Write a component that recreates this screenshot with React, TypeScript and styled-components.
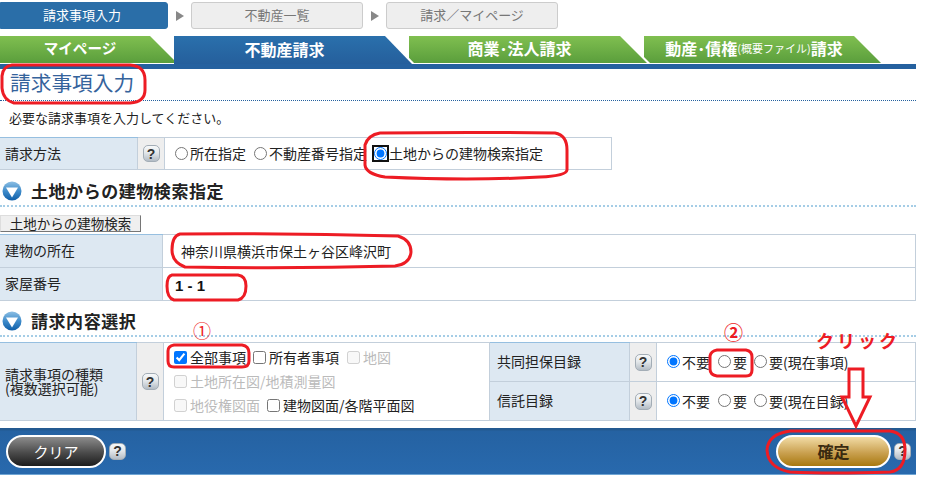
import React, { ReactElement } from "react";
import styled, { createGlobalStyle } from "styled-components";

const GlobalStyle = createGlobalStyle`
	html, body {
		margin: 0;
		padding: 0;
		background: #fff;
		overflow: hidden;
	}
	body {
		font-family: "Noto Sans CJK JP", "Liberation Sans", sans-serif;
		font-size: 14px;
		line-height: 16px;
		color: #222;
	}
	input {
		margin: 0;
	}
`;

const Page = styled.div`
	position: relative;
	width: 952px;
	height: 484px;
	overflow: hidden;
`;
const Content = styled.div`
	width: 916px;
	display: flex;
	flex-direction: column;
`;

const Steps = styled.div`
	display: flex;
	align-items: center;
	height: 27px;
	margin-top: 2px;
`;
const Step = styled.div<{ $active?: boolean }>`
	width: ${(p) => (p.$active ? "168px" : "172px")};
	height: 27px;
	box-sizing: border-box;
	display: flex;
	align-items: center;
	justify-content: center;
	padding: 0 ${(p) => (p.$active ? "4px" : "0")} 2px 0;
	font-size: 13px;
	border-radius: ${(p) => (p.$active ? "0 3px 3px 0" : "3px")};
	color: ${(p) => (p.$active ? "#fff" : "#777")};
	background: ${(p) => (p.$active ? "#2a6ea8" : "#eee")};
	border: 1px solid ${(p) => (p.$active ? "#2a6ea8" : "#ccc")};
`;
const StepArrow = styled.div`
	width: 0;
	height: 0;
	margin: 0 7px 0 8px;
	border-left: 8px solid #888;
	border-top: 5px solid transparent;
	border-bottom: 5px solid transparent;
`;

const Tabs = styled.div`
	display: flex;
	height: 27px;
	margin: 7px 0 1px;
`;
const Tab = styled.div<{ $active?: boolean; $w: number; $z: number }>`
	position: relative;
	z-index: ${(p) => p.$z};
	width: ${(p) => p.$w}px;
	height: ${(p) => (p.$active ? "28px" : "27px")};
	margin-right: -6px;
	display: flex;
	background: #fff;
	clip-path: polygon(0 0, calc(100% - 27px) 0, 100% 100%, 0 100%);
`;
const TabFace = styled.div<{ $active?: boolean; $size?: number }>`
	flex: 1;
	padding: 0 20px 3px 0;
	display: flex;
	align-items: center;
	justify-content: center;
	font-size: ${(p) => p.$size ?? 16}px;
	font-weight: 700;
	color: #fff;
	white-space: nowrap;
	background: ${(p) =>
		p.$active
			? "linear-gradient(#2a70ac, #255f9c)"
			: "linear-gradient(#80bf50, #5a9e3c)"};
	clip-path: polygon(0 0, calc(100% - 30px) 0, calc(100% - 3px) 100%, 0 100%);
`;
const TabSmall = styled.span`
	font-size: 11px;
	font-weight: 400;
`;
const TabLine = styled.div`
	height: 5px;
	background: #25619f;
`;

const PageTitle = styled.h1`
	margin: 0;
	height: 32px;
	box-sizing: border-box;
	padding-left: 10px;
	font-size: 20.7px;
	line-height: 27px;
	font-weight: 400;
	color: #35639c;
	border-bottom: 1px dotted #25619f;
`;
const Lead = styled.p`
	margin: 0;
	height: 36px;
	padding: 9px 0 0 9px;
	box-sizing: border-box;
	font-size: 13px;
`;

const Sheet = styled.div<{ $w?: number; $top?: number }>`
	display: flex;
	flex-direction: column;
	width: ${(p) => (p.$w ? `${p.$w}px` : "auto")};
	margin-top: ${(p) => p.$top ?? 0}px;
	border-top: 1px solid #c3cfdb;
`;
const Row = styled.div<{ $h: number }>`
	display: flex;
	height: ${(p) => p.$h}px;
	box-sizing: border-box;
	border-bottom: 1px solid #c3cfdb;
`;
const Label = styled.div<{ $w: number; $pad?: number; $first?: boolean }>`
	width: ${(p) => p.$w}px;
	flex: none;
	box-sizing: border-box;
	display: flex;
	align-items: center;
	padding: 0 0 2px ${(p) => p.$pad ?? 5}px;
	font-size: 14px;
	line-height: 14px;
	background: #dde8f2;
	border-right: 1px solid #c3cfdb;
	box-shadow: ${(p) => (p.$first ? "0 -1px 0 #96bfe0" : "none")};
`;
const HelpCell = styled.div<{ $w: number }>`
	width: ${(p) => p.$w}px;
	flex: none;
	display: flex;
	align-items: center;
	justify-content: center;
	background: #eee;
	border-right: 1px solid #c3cfdb;
`;
const Value = styled.div<{ $pad?: number }>`
	flex: 1;
	display: flex;
	align-items: center;
	padding: 0 0 1px ${(p) => p.$pad ?? 10}px;
	border-right: 1px solid #c3cfdb;
	font-size: 14px;
`;
const HouseNumber = styled.strong`
	font-family: "Liberation Sans", sans-serif;
	font-size: 15px;
	color: #111;
	white-space: pre;
	padding-top: 5px;
`;
const HelpIcon = styled.span`
	width: 17px;
	height: 17px;
	box-sizing: border-box;
	flex: none;
	display: flex;
	align-items: center;
	justify-content: center;
	font-family: "Liberation Sans", sans-serif;
	font-size: 14px;
	font-weight: 700;
	color: #333;
	border: 1px solid #a3adb6;
	border-radius: 5px;
	background: linear-gradient(#f7f9fa, #e3e7ea 45%, #b3bcc5);
`;

const SectionHead = styled.h2<{ $top: number }>`
	margin: ${(p) => p.$top}px 0 0;
	height: 26px;
	box-sizing: border-box;
	display: flex;
	align-items: center;
	gap: 9px;
	padding: 0 0 5px 2px;
	font-size: 17px;
	letter-spacing: 0.55px;
	font-weight: 700;
	color: #222;
	border-bottom: 2px dotted #a5cde6;
`;
const Ball = styled.svg`
	width: 20px;
	height: 20px;
	flex: none;
`;

const SearchButton = styled.button`
	width: 141px;
	height: 17px;
	margin-top: 8px;
	padding: 0;
	font-family: inherit;
	font-size: 13.5px;
	line-height: 15px;
	color: #222;
	background: #efefef;
	border: 1px solid #767676;
	border-left-color: #ddd;
	border-top-color: #ddd;
	display: block;
`;

const Choice = styled.label<{ $off?: boolean; $gap?: number; $inner?: number }>`
	display: inline-flex;
	align-items: center;
	gap: ${(p) => p.$inner ?? 2}px;
	margin-right: ${(p) => p.$gap ?? 0}px;
	white-space: nowrap;
	font-size: 14px;
	color: ${(p) => (p.$off ? "#bbb" : "#222")};
`;
const Radio = styled.input.attrs({ type: "radio" })<{ $focus?: boolean }>`
	width: 13px;
	height: 13px;
	${(p) => p.$focus && "outline: 2px solid #111; outline-offset: 0; border-radius: 5px;"}
`;
const Check = styled.input.attrs({ type: "checkbox" })`
	width: 13px;
	height: 13px;
`;

const Columns = styled.div`
	display: flex;
	margin-top: 5px;
`;
const Tall = styled.div`
	display: flex;
	width: 490px;
	height: 79px;
	box-sizing: border-box;
	border-top: 1px solid #c3cfdb;
	border-bottom: 1px solid #c3cfdb;
`;
const KindCell = styled.div`
	flex: 1;
	display: flex;
	flex-direction: column;
	justify-content: center;
	gap: 7px;
	padding: 0 0 1px 10px;
	border-right: 1px solid #c3cfdb;
`;
const KindLine = styled.div`
	display: flex;
	height: 17px;
`;

const Footer = styled.div`
	margin-top: 7px;
	height: 47px;
	box-sizing: border-box;
	display: flex;
	align-items: center;
	justify-content: space-between;
	padding: 0 5px 0 6px;
	background: linear-gradient(#235a91 0, #235a91 2px, #2562a2 3px, #2869ad 45px);
	border-bottom: 1px solid #6fa5d4;
`;
const FooterGroup = styled.div`
	display: flex;
	align-items: center;
	gap: 3px;
`;
const PillButton = styled.button<{ $gold?: boolean }>`
	width: ${(p) => (p.$gold ? "115px" : "100px")};
	height: 33px;
	border-radius: 17px;
	border: 2px solid #fff;
	padding: 0;
	font-family: inherit;
	font-size: ${(p) => (p.$gold ? "16px" : "15px")};
	font-weight: ${(p) => (p.$gold ? 700 : 400)};
	color: ${(p) => (p.$gold ? "#3a2a10" : "#fff")};
	background: ${(p) =>
		p.$gold
			? "linear-gradient(#f2dca6, #c9a04f 55%, #a8780f)"
			: "linear-gradient(#8c8c8c, #4a4a4a 55%, #1c1c1c)"};
`;

const Marks = styled.svg`
	position: absolute;
	left: 0;
	top: 0;
	width: 952px;
	height: 484px;
	pointer-events: none;
	fill: none;
	stroke: #ed1c24;
	stroke-width: 3;
`;
const Note = styled.span<{ $x: number; $y: number; $size: number; $bold?: boolean; $track?: number }>`
	position: absolute;
	left: ${(p) => p.$x}px;
	top: ${(p) => p.$y}px;
	font-size: ${(p) => p.$size}px;
	line-height: 20px;
	letter-spacing: ${(p) => p.$track ?? 0}px;
	font-weight: ${(p) => (p.$bold ? 700 : 400)};
	color: #ed1c24;
`;

function BallIcon(): ReactElement {
	return (
		<Ball viewBox="0 0 20 20">
			<defs>
				<linearGradient id="ball" x1="0" y1="0" x2="0" y2="1">
					<stop offset="0" stopColor="#8dbfe3" />
					<stop offset="0.5" stopColor="#3f8ccb" />
					<stop offset="1" stopColor="#0f5ea8" />
				</linearGradient>
			</defs>
			<circle cx="10" cy="10" r="9.5" fill="url(#ball)" />
			<path d="M4 6.5 H16 L10 16.5 Z" fill="#fff" />
		</Ball>
	);
}

function Ring({ d }: { d: string }): ReactElement {
	return <path d={d} />;
}

function HelpBox({ w }: { w: number }): ReactElement {
	return (
		<HelpCell $w={w}>
			<HelpIcon>?</HelpIcon>
		</HelpCell>
	);
}

export default function App(): ReactElement {
	return (
		<Page>
			<GlobalStyle />
			<Content>
				<Steps>
					<Step $active>請求事項入力</Step>
					<StepArrow />
					<Step>不動産一覧</Step>
					<StepArrow />
					<Step>請求／マイページ</Step>
				</Steps>
				<Tabs>
					<Tab $w={180} $z={1}>
						<TabFace $size={14.6}>マイページ</TabFace>
					</Tab>
					<Tab $active $w={241} $z={3}>
						<TabFace $active>不動産請求</TabFace>
					</Tab>
					<Tab $w={241} $z={2}>
						<TabFace>商業･法人請求</TabFace>
					</Tab>
					<Tab $w={240} $z={1}>
						<TabFace>
							動産･債権<TabSmall>(概要ファイル)</TabSmall>請求
						</TabFace>
					</Tab>
				</Tabs>
				<TabLine />
				<PageTitle>請求事項入力</PageTitle>
				<Lead>必要な請求事項を入力してください。</Lead>
				<Sheet $w={612}>
					<Row $h={32}>
						<Label $w={138} $first>請求方法</Label>
						<HelpBox w={26} />
						<Value>
							<Choice $gap={8}>
								<Radio name="method" />
								所在指定
							</Choice>
							<Choice $gap={7}>
								<Radio name="method" />
								不動産番号指定
							</Choice>
							<Choice>
								<Radio name="method" defaultChecked $focus />
								土地からの建物検索指定
							</Choice>
						</Value>
					</Row>
				</Sheet>
				<SectionHead $top={11}>
					<BallIcon />
					土地からの建物検索指定
				</SectionHead>
				<SearchButton>土地からの建物検索</SearchButton>
				<Sheet $top={2}>
					<Row $h={33}>
						<Label $w={163} $first>建物の所在</Label>
						<Value $pad={18}>神奈川県横浜市保土ヶ谷区峰沢町</Value>
					</Row>
					<Row $h={33}>
						<Label $w={163}>家屋番号</Label>
						<Value $pad={12}>
							<HouseNumber>1 - 1</HouseNumber>
						</Value>
					</Row>
				</Sheet>
				<SectionHead $top={10}>
					<BallIcon />
					請求内容選択
				</SectionHead>
				<Columns>
					<Tall>
						<Label $w={137} $first>
							<span>
								請求事項の種類
								<br />
								(複数選択可能)
							</span>
						</Label>
						<HelpBox w={26} />
						<KindCell>
							<KindLine>
								<Choice $gap={7} $inner={3}>
									<Check defaultChecked />
									全部事項
								</Choice>
								<Choice $gap={8} $inner={3}>
									<Check />
									所有者事項
								</Choice>
								<Choice $off $inner={3}>
									<Check disabled />
									地図
								</Choice>
							</KindLine>
							<KindLine>
								<Choice $off $inner={3}>
									<Check disabled />
									土地所在図/地積測量図
								</Choice>
							</KindLine>
							<KindLine>
								<Choice $off $gap={7} $inner={3}>
									<Check disabled />
									地役権図面
								</Choice>
								<Choice $inner={3}>
									<Check />
									建物図面/各階平面図
								</Choice>
							</KindLine>
						</KindCell>
					</Tall>
					<Sheet $w={426}>
						<Row $h={39}>
							<Label $w={140} $pad={7} $first>共同担保目録</Label>
							<HelpBox w={26} />
							<Value>
								<Choice $gap={8}>
									<Radio name="joint" defaultChecked />
									不要
								</Choice>
								<Choice $gap={7}>
									<Radio name="joint" />
									要
								</Choice>
								<Choice>
									<Radio name="joint" />
									要(現在事項)
								</Choice>
							</Value>
						</Row>
						<Row $h={39}>
							<Label $w={140} $pad={7}>信託目録</Label>
							<HelpBox w={26} />
							<Value>
								<Choice $gap={8}>
									<Radio name="trust" defaultChecked />
									不要
								</Choice>
								<Choice $gap={7}>
									<Radio name="trust" />
									要
								</Choice>
								<Choice>
									<Radio name="trust" />
									要(現在目録)
								</Choice>
							</Value>
						</Row>
					</Sheet>
				</Columns>
				<Footer>
					<FooterGroup>
						<PillButton>クリア</PillButton>
						<HelpIcon>?</HelpIcon>
					</FooterGroup>
					<FooterGroup>
						<PillButton $gold>確定</PillButton>
						<HelpIcon>?</HelpIcon>
					</FooterGroup>
				</Footer>
			</Content>
			<Marks viewBox="0 0 952 484">
				<Ring d="M12 65 H130 Q145 66 145 80 V90 Q145 102 130 103 H14 Q3 100 2 88 V76 Q3 66 12 65 Z" />
				<Ring d="M380 133 Q470 132 555 133 Q567 135 567 150 V170 Q566 176 540 177 Q470 181 385 177 Q366 174 365 165 V145 Q368 135 380 133 Z" />
				<Ring d="M180 234 Q290 233 398 236 Q411 240 411 252 Q410 264 395 266 Q290 269 185 267 Q172 262 172 250 Q172 236 180 234 Z" />
				<Ring d="M172 275 H238 Q246 276 246 286 Q246 298 238 300 H174 Q167 298 167 286 Q167 276 172 275 Z" />
				<Ring d="M174 345 H242 Q249 346 249 353 V361 Q249 367 242 367 H174 Q168 367 168 361 V351 Q168 346 174 345 Z" />
				<Ring d="M717 350 H746 Q752 351 752 357 V370 Q752 376 746 376 H717 Q710 375 710 369 V356 Q711 351 717 350 Z" />
				<Ring d="M790 431 H890 Q905 433 905 450 Q905 470 890 472 Q830 474 790 472 Q768 468 767 450 Q768 434 790 431 Z" />
				<Ring d="M849 369 H863 V397 H870 L856 426 L842 397 H849 Z" />
			</Marks>
			<Note $x={193} $y={320} $size={18}>①</Note>
			<Note $x={724} $y={322} $size={19} $bold>②</Note>
			<Note $x={816} $y={330} $size={18} $bold $track={3}>クリック</Note>
		</Page>
	);
}
